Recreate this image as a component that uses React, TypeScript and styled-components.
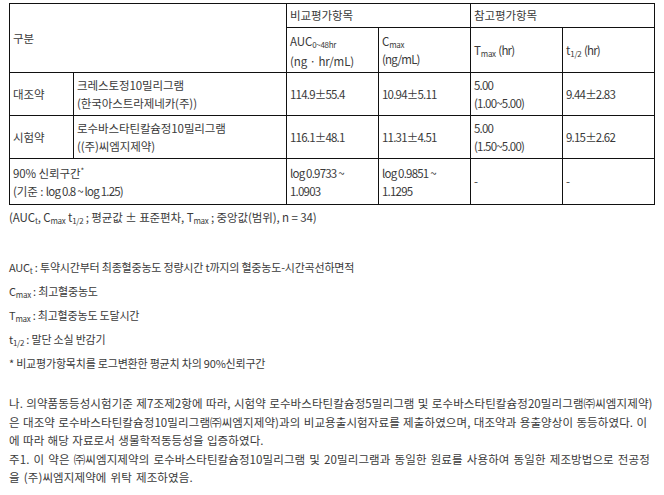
import React from "react";
import styled, { createGlobalStyle } from "styled-components";

const GlobalStyle = createGlobalStyle`
  html, body {
    margin: 0;
    padding: 0;
    background: #ffffff;
  }
  body {
    font-family: "Noto Sans CJK KR", "Noto Sans", sans-serif;
    font-size: 11px;
    color: #3a3a3a;
  }
`;

type Row = {
  group: string;
  name: string[];
  auc: string;
  cmax: string;
  tmax: string[];
  half: string;
};

const rows: Row[] = [
  {
    group: "대조약",
    name: ["크레스토정10밀리그램", "(한국아스트라제네카(주))"],
    auc: "114.9±55.4",
    cmax: "10.94±5.11",
    tmax: ["5.00", "(1.00~5.00)"],
    half: "9.44±2.83",
  },
  {
    group: "시험약",
    name: ["로수바스타틴칼슘정10밀리그램", "((주)씨엠지제약)"],
    auc: "116.1±48.1",
    cmax: "11.31±4.51",
    tmax: ["5.00", "(1.50~5.00)"],
    half: "9.15±2.62",
  },
];

export default function App(): JSX.Element {
  return (
    <Page>
      <GlobalStyle />
      <Table>
        <colgroup>
          <col style={{ width: 64 }} />
          <col style={{ width: 213 }} />
          <col style={{ width: 92 }} />
          <col style={{ width: 92 }} />
          <col style={{ width: 92 }} />
          <col style={{ width: 92 }} />
        </colgroup>
        <tbody>
          <Tr height={24}>
            <Td colSpan={2} rowSpan={2}>
              구분
            </Td>
            <Td colSpan={2}>비교평가항목</Td>
            <Td colSpan={2}>참고평가항목</Td>
          </Tr>
          <Tr height={45}>
            <Td>
              <Line tall>
                AUC<Sub>0~48hr</Sub>
              </Line>
              <Line>(ng · hr/mL)</Line>
            </Td>
            <Td>
              <Line>
                C<Sub>max</Sub>
              </Line>
              <Line>
                <Num>(ng/mL)</Num>
              </Line>
            </Td>
            <Td>
              T<Sub>max</Sub> <Num>(hr)</Num>
            </Td>
            <Td>
              t<Sub>1/2</Sub> <Num>(hr)</Num>
            </Td>
          </Tr>
          {rows.map((r) => (
            <Tr height={43} key={r.group}>
              <Td>{r.group}</Td>
              <Td>
                {r.name.map((n) => (
                  <Line key={n}>{n}</Line>
                ))}
              </Td>
              <Td>
                <Num>{r.auc}</Num>
              </Td>
              <Td>
                <Num>{r.cmax}</Num>
              </Td>
              <Td>
                {r.tmax.map((n) => (
                  <Line key={n}>
                    <Num>{n}</Num>
                  </Line>
                ))}
              </Td>
              <Td>
                <Num>{r.half}</Num>
              </Td>
            </Tr>
          ))}
          <Tr height={46}>
            <Td colSpan={2}>
              <Line>
                90% 신뢰구간<Sup>*</Sup>
              </Line>
              <Line>
                (기준 : <Num>log 0.8 ~ log 1.25)</Num>
              </Line>
            </Td>
            <Td>
              <Line>
                <Num>log 0.9733 ~</Num>
              </Line>
              <Line>
                <Num>1.0903</Num>
              </Line>
            </Td>
            <Td>
              <Line>
                <Num>log 0.9851 ~</Num>
              </Line>
              <Line>
                <Num>1.1295</Num>
              </Line>
            </Td>
            <Td>-</Td>
            <Td>-</Td>
          </Tr>
        </tbody>
      </Table>

      <Caption>
        (AUC<Sub>t</Sub>, C<Sub>max</Sub> t<Sub>1/2</Sub> ; 평균값 ± 표준편차, T
        <Sub>max</Sub> ; 중앙값(범위), n = 34)
      </Caption>

      <Legend>
        <LegendItem>
          AUC<Sub>t</Sub> : 투약시간부터 최종혈중농도 정량시간 t까지의
          혈중농도-시간곡선하면적
        </LegendItem>
        <LegendItem>
          C<Sub>max</Sub> : 최고혈중농도
        </LegendItem>
        <LegendItem>
          T<Sub>max</Sub> : 최고혈중농도 도달시간
        </LegendItem>
        <LegendItem>
          t<Sub>1/2</Sub> : 말단 소실 반감기
        </LegendItem>
        <LegendItem>* 비교평가항목치를 로그변환한 평균치 차의 90%신뢰구간</LegendItem>
      </Legend>

      <Paragraph>
        나. 의약품동등성시험기준 제7조제2항에 따라, 시험약
        로수바스타틴칼슘정5밀리그램 및 로수바스타틴칼슘정20밀리그램㈜씨엠지제약)
        은 대조약 로수바스타틴칼슘정10밀리그램㈜씨엠지제약)과의 비교용출시험자료를
        제출하였으며, 대조약과 용출양상이 동등하였다. 이에 따라 해당 자료로서
        생물학적동등성을 입증하였다.
        <br />
        <Note>
          주1. 이 약은 ㈜씨엠지제약의 로수바스타틴칼슘정10밀리그램 및
          20밀리그램과 동일한 원료를 사용하여 동일한 제조방법으로 전공정을
          (주)씨엠지제약에 위탁 제조하였음.
        </Note>
      </Paragraph>
    </Page>
  );
}

const Page = styled.div`
  padding: 3px 10px 0 9px;
  width: 664px;
  box-sizing: border-box;
`;

const Table = styled.table`
  border-collapse: collapse;
  table-layout: fixed;
  width: 646px;
`;

const Tr = styled.tr<{ height: number }>`
  height: ${(p) => p.height}px;
`;

const Td = styled.td`
  border: 1px solid #111;
  padding: 0 3px;
  vertical-align: middle;
  line-height: 17px;
  font-size: 11.5px;
  letter-spacing: -0.1px;
`;

const Line = styled.div<{ tall?: boolean }>`
  line-height: ${(p) => (p.tall ? 21 : 18)}px;
`;

const Num = styled.span`
  letter-spacing: -0.8px;
`;

const Sub = styled.sub`
  font-size: 8px;
  vertical-align: -2px;
  line-height: 0;
  letter-spacing: -0.3px;
`;

const Sup = styled.sup`
  font-size: 8px;
  vertical-align: 4px;
  line-height: 0;
`;

const Caption = styled.div`
  margin-top: 3px;
  font-size: 11.5px;
  line-height: 18px;
  letter-spacing: -0.1px;
`;

const Legend = styled.div`
  margin-top: 29px;
  display: flex;
  flex-direction: column;
`;

const LegendItem = styled.div`
  line-height: 24px;
  letter-spacing: -0.2px;
`;

const Paragraph = styled.p`
  margin: 19px 0 0;
  font-size: 11.5px;
  line-height: 18.5px;
  letter-spacing: 0.1px;
  word-spacing: 0.6px;
`;

const Note = styled.span`
  word-spacing: 1.4px;
`;
